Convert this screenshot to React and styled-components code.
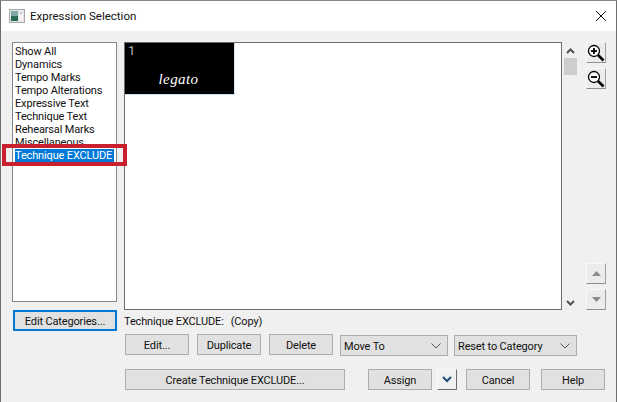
import React from 'react';
import styled, { createGlobalStyle } from 'styled-components';

const GlobalStyle = createGlobalStyle`
  html, body { margin: 0; padding: 0; background: #f0f0f0; }
  * { box-sizing: border-box; }
`;

const Dialog = styled.div`
  position: relative;
  width: 617px;
  height: 402px;
  background: #f0f0f0;
  border-left: 1px solid #6e6e6e;
  border-right: 1px solid #6e6e6e;
  border-top: 1px solid #8a8a8a;
  font-family: Roboto, "Liberation Sans", Arial, sans-serif;
  font-size: 11px;
  letter-spacing: -0.15px;
  color: #111;
  overflow: hidden;
`;

const TitleBar = styled.div`
  height: 30px;
  background: #fff;
  display: flex;
  align-items: center;
  padding-left: 8px;
  font-size: 11.5px;
  letter-spacing: 0;
  gap: 5px;
`;

const CloseBtn = styled.div`
  margin-left: auto;
  margin-right: 9px;
  width: 12px;
  height: 12px;
  display: flex;
`;

const Body = styled.div`
  display: grid;
  grid-template-columns: 105px 1fr;
  column-gap: 7px;
  padding: 11px 0 0 11px;
`;

const LeftCol = styled.div`
  display: flex;
  flex-direction: column;
`;

const CategoryList = styled.div`
  width: 105px;
  height: 260px;
  background: #fff;
  border: 1px solid #828790;
  padding: 2px 2px;
  overflow: hidden;
`;

const Category = styled.div`
  height: 13px;
  line-height: 13px;
  white-space: nowrap;
  background: ${p => (p.$selected ? '#0078d7' : 'transparent')};
  color: ${p => (p.$selected ? '#fff' : '#111')};
`;

const EditCategories = styled.div`
  width: 104px;
  height: 21px;
  margin: 8px 0 0 1px;
  border: 2px solid #0078d7;
  background: #e1e1e1;
  padding-top: 1px;
  display: flex;
  align-items: center;
  justify-content: center;
`;

const RightCol = styled.div`
  display: flex;
  flex-direction: column;
`;

const PreviewRow = styled.div`
  display: flex;
  height: 268px;
`;

const Preview = styled.div`
  width: 438px;
  height: 268px;
  background: #fff;
  border: 1px solid #6d6d6d;
`;

const Cell = styled.div`
  width: 110px;
  height: 52px;
  background: #000;
  color: #b8b8b8;
  font-size: 13px;
  line-height: 13px;
  padding: 1px 0 0 3px;
  border-right: 1px solid #cfe3f2;
  border-bottom: 1px solid #cfe3f2;
  display: flex;
  flex-direction: column;
`;

const CellText = styled.div`
  font-family: "Liberation Serif", "Times New Roman", serif;
  font-style: italic;
  font-size: 15px;
  line-height: 17px;
  text-align: center;
  margin-top: 14px;
  padding-right: 5px;
  color: #fff;
  letter-spacing: 0.4px;
`;

const ScrollBar = styled.div`
  width: 14px;
  height: 268px;
  display: flex;
  flex-direction: column;
  align-items: center;
  margin-left: 1px;
`;

const ScrollArrow = styled.svg`
  width: 9px;
  height: 6px;
  flex: none;
  margin: ${p => (p.$down ? 'auto 0 4px' : '6px 0 0')};
`;

const ScrollThumb = styled.div`
  width: 13px;
  height: 17px;
  margin-top: 4px;
  background: #cdcdcd;
`;

const SideTools = styled.div`
  width: 20px;
  height: 268px;
  margin-left: 9px;
  display: flex;
  flex-direction: column;
`;

const SquareBtn = styled.div`
  width: 20px;
  height: 21px;
  flex: none;
  background: #ececec;
  border-top: 1px solid #f8f8f8;
  border-left: 1px solid #f8f8f8;
  border-right: 1px solid #a0a0a0;
  border-bottom: 1px solid #8f8f8f;
  display: flex;
  align-items: center;
  justify-content: center;
  margin-top: ${p => p.$gap || 0};
`;

const Caption = styled.div`
  height: 14px;
  line-height: 14px;
  margin-top: 5px;
  display: flex;
  gap: 7px;
  white-space: nowrap;
`;

const ActionRow = styled.div`
  display: flex;
  margin-top: ${p => p.$top}px;
  padding-left: 1px;
`;

const Button = styled.div`
  width: ${p => p.$w || 64}px;
  height: 21px;
  margin-left: ${p => p.$ml || 0}px;
  background: #e1e1e1;
  border: 1px solid #adadad;
  padding-top: 1px;
  display: flex;
  align-items: center;
  justify-content: center;
  white-space: nowrap;
  flex: none;
`;

const Select = styled.div`
  width: ${p => p.$w}px;
  height: 21px;
  margin-left: ${p => p.$ml || 0}px;
  margin-top: 1px;
  background: #e1e1e1;
  border: 1px solid #adadad;
  display: flex;
  align-items: center;
  padding: 1px 6px 0 3px;
  justify-content: space-between;
  white-space: nowrap;
  flex: none;
`;

const AssignMenu = styled(SquareBtn)`
  margin-left: 5px;
  background: #f0f0f0;
  border-right: 1px solid #6d6d6d;
  border-bottom: 1px solid #6d6d6d;
`;

const Highlight = styled.div`
  position: absolute;
  left: 1px;
  top: 143px;
  width: 125px;
  height: 22px;
  border: 4px solid #c8202f;
  pointer-events: none;
`;

const AppIcon = () => (
  <svg width="16" height="14" viewBox="0 0 16 14">
    <rect x="0.5" y="0.5" width="15" height="13" fill="#e4e4e4" stroke="#a8a8a8" />
    <rect x="2" y="2" width="7" height="10" fill="#7fa6a6" />
    <rect x="2" y="7" width="7" height="5" fill="#2b6a58" />
    <rect x="10" y="2" width="4" height="10" fill="#f4f4f4" />
    <rect x="11" y="3" width="2" height="2" fill="#b9c4d2" />
  </svg>
);

const Chevron = () => (
  <svg width="10" height="6" viewBox="0 0 10 6" fill="none" stroke="#555" strokeWidth="1">
    <path d="M0.5 0.5 L5 5 L9.5 0.5" />
  </svg>
);

const Magnifier = ({ plus }) => (
  <svg width="18" height="18" viewBox="0 0 18 18" fill="none">
    <circle cx="7" cy="7" r="5.5" fill="#fff" stroke="#000" strokeWidth="1.3" />
    <path d="M4 7 H10" stroke="#000" strokeWidth="1.8" />
    {plus && <path d="M7 4 V10" stroke="#000" strokeWidth="1.8" />}
    <path d="M11 11 L16.5 16.5" stroke="#000" strokeWidth="2.6" />
  </svg>
);

const categories = [
  'Show All',
  'Dynamics',
  'Tempo Marks',
  'Tempo Alterations',
  'Expressive Text',
  'Technique Text',
  'Rehearsal Marks',
  'Miscellaneous',
  'Technique EXCLUDE',
];

const App = () => (
  <>
    <GlobalStyle />
    <Dialog>
      <TitleBar>
        <AppIcon />
        Expression Selection
        <CloseBtn>
          <svg width="12" height="12" viewBox="0 0 12 12" stroke="#111" strokeWidth="1">
            <path d="M1 1 L11 11 M11 1 L1 11" />
          </svg>
        </CloseBtn>
      </TitleBar>
      <Body>
        <LeftCol>
          <CategoryList>
            {categories.map(c => (
              <Category key={c} $selected={c === 'Technique EXCLUDE'}>{c}</Category>
            ))}
          </CategoryList>
          <EditCategories>Edit Categories...</EditCategories>
        </LeftCol>
        <RightCol>
          <PreviewRow>
            <Preview>
              <Cell>
                1
                <CellText>legato</CellText>
              </Cell>
            </Preview>
            <ScrollBar>
              <ScrollArrow viewBox="0 0 9 6" fill="none" stroke="#505050" strokeWidth="2">
                <path d="M1 5 L4.5 1.5 L8 5" />
              </ScrollArrow>
              <ScrollThumb />
              <ScrollArrow $down viewBox="0 0 9 6" fill="none" stroke="#505050" strokeWidth="2">
                <path d="M1 1 L4.5 4.5 L8 1" />
              </ScrollArrow>
            </ScrollBar>
            <SideTools>
              <SquareBtn><Magnifier plus /></SquareBtn>
              <SquareBtn $gap="5px"><Magnifier /></SquareBtn>
              <SquareBtn $gap="auto">
                <svg width="9" height="5" viewBox="0 0 9 5"><path d="M4.5 0 L9 5 H0 Z" fill="#8a8a8a" /></svg>
              </SquareBtn>
              <SquareBtn $gap="5px">
                <svg width="9" height="5" viewBox="0 0 9 5"><path d="M0 0 H9 L4.5 5 Z" fill="#8a8a8a" /></svg>
              </SquareBtn>
            </SideTools>
          </PreviewRow>
          <Caption>
            <span>Technique EXCLUDE:</span>
            <span>(Copy)</span>
          </Caption>
          <ActionRow $top={5}>
            <Button>Edit...</Button>
            <Button $ml={8}>Duplicate</Button>
            <Button $ml={8}>Delete</Button>
            <Select $w={108} $ml={7}>Move To<Chevron /></Select>
            <Select $w={123} $ml={6}>Reset to Category<Chevron /></Select>
          </ActionRow>
          <ActionRow $top={13}>
            <Button $w={220}>Create Technique EXCLUDE...</Button>
            <Button $ml={23}>Assign</Button>
            <AssignMenu>
              <svg width="10" height="7" viewBox="0 0 10 7" fill="none" stroke="#1f4e79" strokeWidth="2">
                <path d="M1 1 L5 5 L9 1" />
              </svg>
            </AssignMenu>
            <Button $ml={9}>Cancel</Button>
            <Button $ml={11}>Help</Button>
          </ActionRow>
        </RightCol>
      </Body>
      <Highlight />
    </Dialog>
  </>
);

export default App;
